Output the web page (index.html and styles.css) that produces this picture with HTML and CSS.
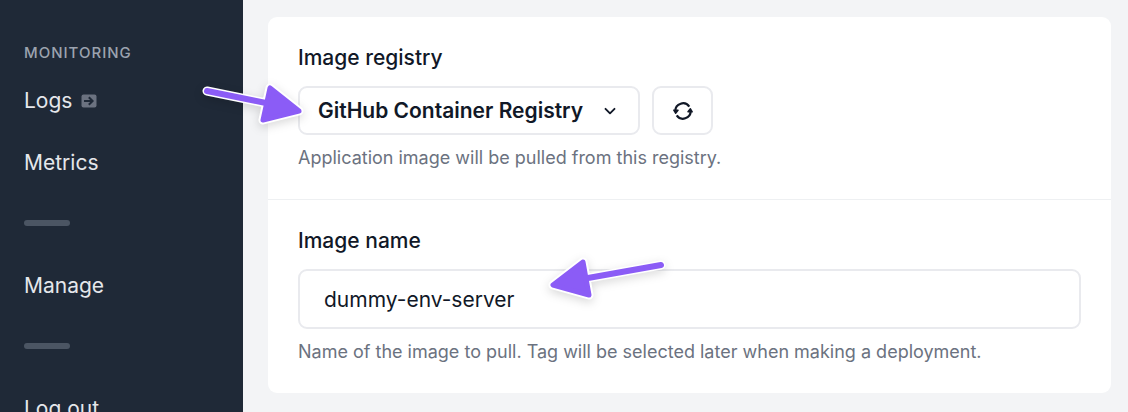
FILE: index.html
```html
<!DOCTYPE html>
<html lang="en">
<head>
<meta charset="utf-8">
<title>Image registry</title>
<link rel="stylesheet" href="styles.css">
</head>
<body>
<div class="app">
  <nav class="sidebar">
    <h2 class="sidebar-heading">Monitoring</h2>
    <a class="nav-link" href="#logs">Logs
      <svg class="nav-icon" viewBox="0 0 16 14" aria-hidden="true">
        <rect x=".5" y=".5" width="15" height="13" rx="2" fill="#6b7280"/>
        <path d="M3 7H11M7.800 3.200 11.600 7 7.800 10.800" fill="none" stroke="#1f2937" stroke-width="2"/>
      </svg>
    </a>
    <a class="nav-link" href="#metrics">Metrics</a>
    <hr class="nav-rule">
    <a class="nav-link" href="#manage">Manage</a>
    <hr class="nav-rule">
    <a class="nav-link" href="#logout">Log out</a>
  </nav>
  <main class="content">
    <form class="card">
      <section class="field">
        <label class="field-label" for="registry">Image registry</label>
        <div class="field-row">
          <div class="select-wrap">
            <select class="select" id="registry"><option>GitHub Container Registry</option></select>
            <svg class="chevron" viewBox="0 0 12 12" aria-hidden="true"><path d="M1.500 3.800 6 8.300 10.500 3.800" fill="none" stroke="#111827" stroke-width="1.900" stroke-linecap="round" stroke-linejoin="round"/></svg>
          </div>
          <button class="refresh" type="button" aria-label="Refresh registries">
            <svg class="refresh-icon" viewBox="0 0 22 20" aria-hidden="true">
              <path d="M3.300 10A7.700 7.700 0 0 1 17.300 5.600M18.700 10A7.700 7.700 0 0 1 4.700 14.400" fill="none" stroke="#111827" stroke-width="2.200"/>
              <path d="M1.800 9.200H6L3.600 12.200ZM20.200 10.800H16L18.400 7.800Z" fill="#111827" stroke="#111827" stroke-width="1.500" stroke-linejoin="round"/>
            </svg>
          </button>
        </div>
        <p class="help">Application image will be pulled from this registry.</p>
      </section>
      <section class="field">
        <label class="field-label" for="image-name">Image name</label>
        <input class="input" id="image-name" type="text" value="dummy-env-server">
        <p class="help">Name of the image to pull. Tag will be selected later when making a deployment.</p>
      </section>
    </form>
  </main>
  <svg class="pointer pointer-registry" viewBox="0 0 110 50" aria-hidden="true">
    <g stroke-linejoin="round" stroke-linecap="round">
      <path d="M11 11 70 23M74 8 67 40 103 31Z" fill="#fff" stroke="#fff" stroke-width="9"/>
      <path d="M11 11 70 23" stroke="#8b5cf6" stroke-width="6"/>
      <path d="M74 8 67 40 103 31Z" fill="#8b5cf6" stroke="#8b5cf6" stroke-width="5"/>
    </g>
  </svg>
  <svg class="pointer pointer-name" viewBox="0 0 130 55" aria-hidden="true">
    <g stroke-linejoin="round" stroke-linecap="round">
      <path d="M121 15 48 28M43 12 13 35 49 45Z" fill="#fff" stroke="#fff" stroke-width="9"/>
      <path d="M121 15 48 28" stroke="#8b5cf6" stroke-width="6"/>
      <path d="M43 12 13 35 49 45Z" fill="#8b5cf6" stroke="#8b5cf6" stroke-width="5"/>
    </g>
  </svg>
</div>
</body>
</html>
```
FILE: styles.css
```css
* { box-sizing: border-box; }
body {
  margin: 0;
  background: #f3f4f6;
  color: #111827;
  font-family: Inter, "Liberation Sans", sans-serif;
  font-size: 21px;
}
.app {
  position: relative;
  display: grid;
  grid-template-columns: 243px 1fr;
  height: 100vh;
  overflow: hidden;
}
.sidebar {
  padding: 41px 24px 0;
  background: #1f2937;
  overflow: hidden;
}
.sidebar-heading {
  margin: 0 0 4px;
  color: #9ca3af;
  font-size: 15px;
  font-weight: 500;
  line-height: 24px;
  letter-spacing: 1px;
  text-transform: uppercase;
}
.nav-link {
  display: flex;
  align-items: center;
  gap: 9px;
  height: 62px;
  color: #e5e7eb;
  text-decoration: none;
}
.nav-icon { width: 16px; height: 14px; margin-top: 2px; }
.nav-rule {
  width: 46px;
  height: 6px;
  margin: 27px 0 28px;
  border: 0;
  border-radius: 3px;
  background: #4b5563;
}
.content { padding: 17px 17px 19px 25px; }
.card { border-radius: 9px; background: #fff; }
.field {
  display: flex;
  flex-direction: column;
  padding: 27px 30px 28px;
}
.field + .field { border-top: 1px solid #eef0f2; }
.field-label {
  margin-bottom: 14px;
  font-weight: 500;
  line-height: 28px;
}
.field-row { display: flex; gap: 12px; }
.select-wrap { display: grid; align-items: center; }
.select, .chevron { grid-area: 1 / 1; }
.select, .refresh, .input {
  border: 2px solid #e9eaee;
  border-radius: 9px;
  background: #fff;
  color: #111827;
  font-family: inherit;
  font-size: 21px;
}
.select {
  height: 49px;
  padding: 0 54px 0 18px;
  appearance: none;
  font-weight: 600;
}
.chevron {
  justify-self: end;
  width: 12px;
  height: 12px;
  margin-right: 24px;
  pointer-events: none;
}
.refresh {
  display: grid;
  place-items: center;
  width: 61px;
  height: 49px;
  padding: 0;
}
.refresh-icon { width: 22px; height: 20px; }
.input {
  width: 100%;
  height: 60px;
  padding: 0 24px;
}
.help {
  margin: 10px 0 0;
  color: #6b7280;
  font-size: 18px;
  line-height: 26px;
}
.pointer {
  position: absolute;
  pointer-events: none;
  filter: drop-shadow(0 3px 5px rgb(0 0 0 / 15%));
  overflow: visible;
}
.pointer-registry { left: 196px; top: 80px; width: 110px; height: 50px; }
.pointer-name { left: 540px; top: 250px; width: 130px; height: 55px; }
```
